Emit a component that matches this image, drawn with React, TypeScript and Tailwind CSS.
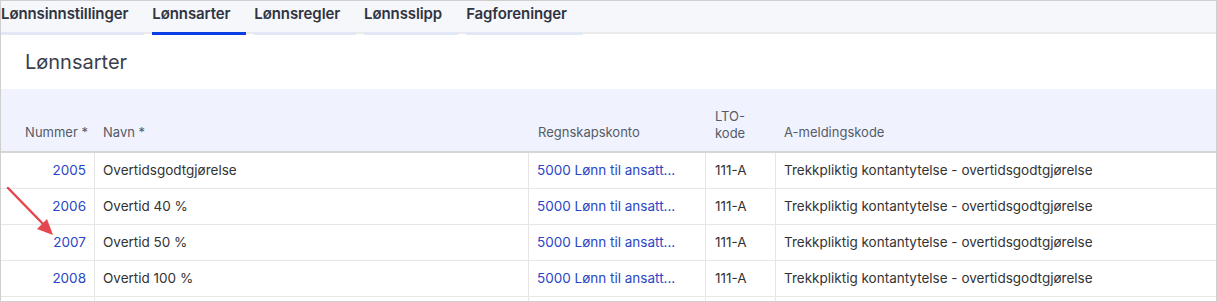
import React from "react";

const tabs = ["Lønnsinnstillinger", "Lønnsarter", "Lønnsregler", "Lønnsslipp", "Fagforeninger"];

const rows = [
  { nr: "2005", navn: "Overtidsgodtgjørelse" },
  { nr: "2006", navn: "Overtid 40 %" },
  { nr: "2007", navn: "Overtid 50 %" },
  { nr: "2008", navn: "Overtid 100 %" },
];

const cols = "grid grid-cols-[94px_434px_177px_70px_1fr]";

export default function App() {
  return (
    <div
      className="relative w-[1217px] h-[302px] overflow-hidden bg-white border border-[#cfcfcf]"
      style={{ fontFamily: "Inter, 'Noto Sans', sans-serif" }}
    >
      {/* Tabs */}
      <div className="flex h-[33px] bg-[#f6f7fb] border-b-2 border-[#ebebeb]">
        {tabs.map((t, i) => (
          <div
            key={t}
            className={
              "h-[34px] pr-[16px] mr-[8px] flex items-center pb-[4px] text-[15px] font-semibold tracking-[-0.1px] text-[#2f3441] border-b-[3px] " +
              (i === 1 ? "border-[#0b3fe6]" : "border-[#e3e8f7]")
            }
          >
            {t}
          </div>
        ))}
      </div>

      {/* Heading */}
      <div className="h-[55px] flex items-center pl-[24px] text-[20px] text-[#3a3f4c]">Lønnsarter</div>

      {/* Table header */}
      <div className={cols + " h-[64px] bg-[#f0f3fe] border-b-2 border-[#d6d6d6] text-[13px] text-[#555b66] items-end pb-[9px]"}>
        <div className="text-right pr-[7px]">Nummer *</div>
        <div className="pl-[8px]">Navn *</div>
        <div className="pl-[9px]">Regnskapskonto</div>
        <div className="pl-[9px] leading-[17px]">
          LTO-
          <br />
          kode
        </div>
        <div className="pl-[8px]">A-meldingskode</div>
      </div>

      {/* Rows */}
      {rows.map((r) => (
        <div key={r.nr} className={cols + " h-[36px] border-b border-[#e6e6e6] text-[13.5px]"}>
          <div className="flex items-center justify-end pr-[8px] text-[#2a46c6] border-r border-[#e6e6e6]">{r.nr}</div>
          <div className="flex items-center pl-[8px] text-[#333] border-r border-[#e6e6e6]">{r.navn}</div>
          <div className="flex items-center pl-[8px] text-[#2a46c6] border-r border-[#e6e6e6]">5000 Lønn til ansatt...</div>
          <div className="flex items-center pl-[9px] text-[#333] border-r border-[#e6e6e6]">111-A</div>
          <div className="flex items-center pl-[8px] text-[#333]">Trekkpliktig kontantytelse - overtidsgodtgjørelse</div>
        </div>
      ))}
      <div className={cols + " h-[36px]"}>
        <div className="border-r border-[#e6e6e6]" />
        <div className="border-r border-[#e6e6e6]" />
        <div className="border-r border-[#e6e6e6]" />
        <div className="border-r border-[#e6e6e6]" />
        <div />
      </div>

      {/* Red annotation arrow */}
      <svg className="absolute left-0 top-0 pointer-events-none" width="80" height="260" viewBox="0 0 80 260">
        <line x1="7" y1="187" x2="44" y2="225" stroke="#e4474f" strokeWidth="2.5" strokeLinecap="round" />
        <polygon points="52,234 36,228 46,218" fill="#e4474f" />
      </svg>
    </div>
  );
}
